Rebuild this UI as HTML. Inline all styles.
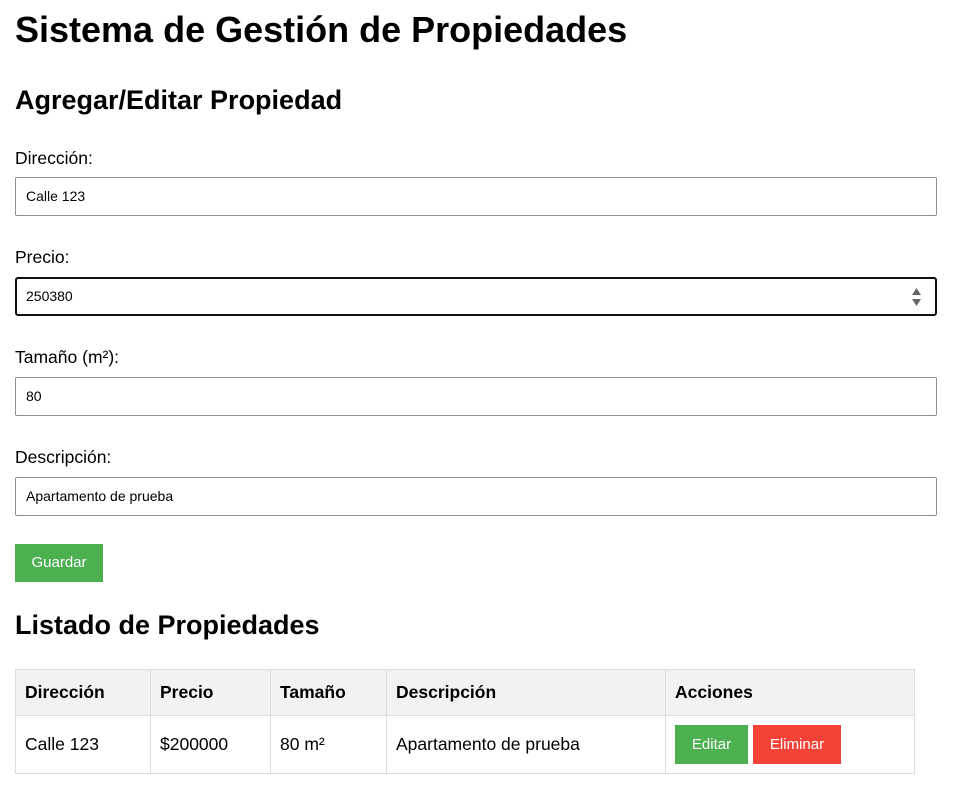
<!DOCTYPE html>
<html><head><meta charset="utf-8"><style>
body{margin:0;font-family:"Liberation Sans",Arial,sans-serif;color:#000;background:#fff;position:relative;width:959px;height:792px;overflow:hidden}
.a{position:absolute;margin:0}
h1{font-size:36px;font-weight:bold}
h2{font-size:27px;font-weight:bold}
.lbl{font-size:17.5px;left:15px}
.inp{left:15px;border:1px solid #8f8f8f;border-radius:2px;font-size:14px;box-sizing:border-box;width:922px;height:39px;line-height:37px;padding-left:10px}
.btn{color:#fff;font-size:15px;text-align:center}
table{border-collapse:collapse;position:absolute;left:15px;top:669px;width:900px;font-size:17.5px}
td,th{border:1px solid #ddd;text-align:left;padding:0 9px}
th{background:#f2f2f2;height:45px}
td{height:57px}
</style></head><body>
<h1 class="a" style="left:15px;top:9px">Sistema de Gestión de Propiedades</h1>
<h2 class="a" style="left:15px;top:85px">Agregar/Editar Propiedad</h2>
<div class="a lbl" style="top:148px">Dirección:</div>
<div class="a inp" style="top:177px">Calle 123</div>
<div class="a lbl" style="top:247px">Precio:</div>
<div class="a inp" style="top:277px;border:2px solid #101010;line-height:35px;padding-left:9px;border-radius:3px">250380
<svg style="position:absolute;right:13px;top:8px" width="11" height="20"><path d="M1 8L5.5 1L10 8Z M1 12L5.5 19L10 12Z" fill="#666"/></svg></div>
<div class="a lbl" style="top:347px">Tamaño (m²):</div>
<div class="a inp" style="top:377px">80</div>
<div class="a lbl" style="top:447px">Descripción:</div>
<div class="a inp" style="top:477px">Apartamento de prueba</div>
<div class="a btn" style="left:15px;top:544px;width:88px;height:38px;line-height:38px;background:#4caf50">Guardar</div>
<h2 class="a" style="left:15px;top:610px">Listado de Propiedades</h2>
<table>
<tr><th style="width:116px">Dirección</th><th style="width:101px">Precio</th><th style="width:97px">Tamaño</th><th style="width:260px">Descripción</th><th>Acciones</th></tr>
<tr><td>Calle 123</td><td>$200000</td><td>80 m²</td><td>Apartamento de prueba</td><td></td></tr>
</table>
<div class="a btn" style="left:675px;top:725px;width:73px;height:39px;line-height:39px;background:#4caf50">Editar</div>
<div class="a btn" style="left:753px;top:725px;width:88px;height:39px;line-height:39px;background:#f44336">Eliminar</div>
</body></html>
